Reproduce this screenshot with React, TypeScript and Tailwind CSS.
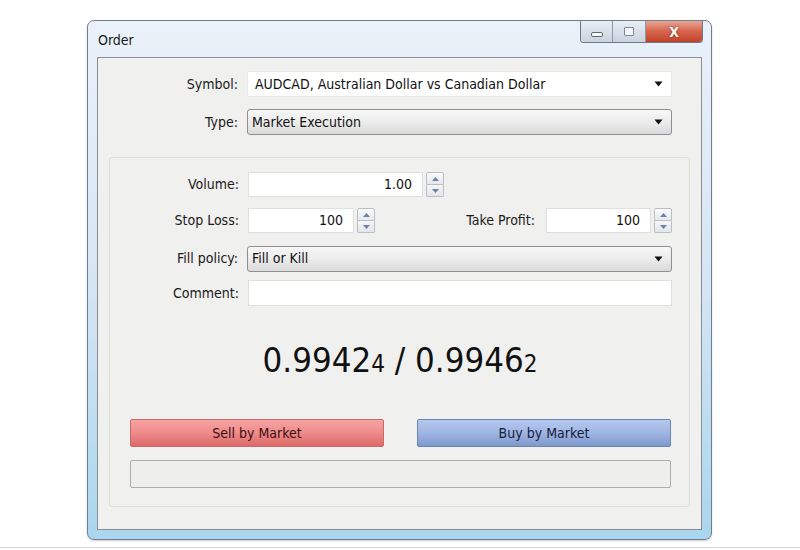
import React from "react";

const font = { fontFamily: '"DejaVu Sans Condensed", "DejaVu Sans", sans-serif' };

function Arrow() {
  return (
    <svg width="9" height="6" viewBox="0 0 9 6" className="shrink-0">
      <path d="M0.5 0.5 L8.5 0.5 L4.5 5.5 Z" fill="#111" />
    </svg>
  );
}

function Spinner() {
  return (
    <div className="flex flex-col w-[18px] h-[25px] ml-[3px]">
      <div className="flex-1 flex items-center justify-center border border-[#b9bec6] rounded-t-[2px] bg-gradient-to-b from-[#fbfbfb] to-[#e6e8ec]">
        <svg width="7" height="4" viewBox="0 0 7 4"><path d="M0 4 L3.5 0 L7 4 Z" fill="#6d82ab" /></svg>
      </div>
      <div className="flex-1 flex items-center justify-center border border-t-0 border-[#b9bec6] rounded-b-[2px] bg-gradient-to-b from-[#f6f6f7] to-[#e3e5ea]">
        <svg width="7" height="4" viewBox="0 0 7 4"><path d="M0 0 L3.5 4 L7 0 Z" fill="#6d82ab" /></svg>
      </div>
    </div>
  );
}

function Label({ children, w }: { children: React.ReactNode; w: string }) {
  return <div className={`${w} shrink-0 text-right pr-[9px] text-[14px] text-[#1a1a1a] whitespace-nowrap`}>{children}</div>;
}

function NumInput({ value, w }: { value: string; w: string }) {
  return (
    <div className={`${w} h-[25px] bg-white border border-[#dedfe0] flex items-center justify-end pr-[10px] text-[14px] text-[#111]`}>
      {value}
    </div>
  );
}

function GraySelect({ text }: { text: string }) {
  return (
    <div className="flex-1 h-[26px] rounded-[3px] border border-[#8d8f93] bg-gradient-to-b from-[#f7f7f7] via-[#ececec] to-[#dadada] flex items-center justify-between pl-[4px] pr-[8px] text-[14px] text-[#111]">
      <span>{text}</span>
      <Arrow />
    </div>
  );
}

export default function App() {
  return (
    <div className="w-[800px] h-[550px] bg-white overflow-hidden" style={font}>
      <div className="h-[548px] border-b border-[#d4d4d4] pt-[20px]">
        <div className="ml-[87px] w-[625px] h-[520px] rounded-[7px] border border-[#6f7f90] bg-gradient-to-b from-[#eaf1f9] via-[#d6e5f4] to-[#a9d6ee] flex flex-col px-[9px] pb-[9px] shadow-[0_1px_2px_rgba(0,0,0,0.2)]">
          {/* title bar */}
          <div className="h-[36px] shrink-0 flex items-start justify-between">
            <div className="pt-[9px] pl-[1px] text-[14px] text-[#1a1a1a]">Order</div>
            <div className="flex h-[22px] mr-[-1px] rounded-b-[4px] overflow-hidden border border-t-0 border-[#6a7888]">
              <div className="w-[32px] flex items-center justify-center bg-gradient-to-b from-[#e9eef4] to-[#c9d3de] border-r border-[#8e9aa7]">
                <div className="w-[12px] h-[5px] border border-[#5a6878] rounded-[2px] bg-white mt-[6px]" />
              </div>
              <div className="w-[33px] flex items-center justify-center bg-gradient-to-b from-[#e9eef4] to-[#c9d3de] border-r border-[#8e9aa7]">
                <div className="w-[10px] h-[9px] border border-[#7e8a98] rounded-[1px] bg-[#f3f5f8]" />
              </div>
              <div className="w-[56px] flex items-center justify-center bg-gradient-to-b from-[#e8a595] via-[#d5634d] to-[#c24128]">
                <span className="text-white font-bold text-[14px] leading-none" style={{ textShadow: "0 0 2px #7a1a0a" }}>X</span>
              </div>
            </div>
          </div>
          {/* client */}
          <div className="flex-1 border border-[#8a8d91] bg-[#f0f0ee] flex flex-col pt-[13px]">
            <div className="flex items-center h-[26px] pr-[29px]">
              <Label w="w-[149px]">Symbol:</Label>
              <div className="flex-1 h-[26px] bg-white border border-[#e9e9e9] flex items-center justify-between pl-[7px] pr-[8px] text-[14px] text-[#111]">
                <span>AUDCAD, Australian Dollar vs Canadian Dollar</span>
                <Arrow />
              </div>
            </div>
            <div className="flex items-center h-[26px] mt-[12px] pr-[29px]">
              <Label w="w-[149px]">Type:</Label>
              <GraySelect text="Market Execution" />
            </div>
            {/* group */}
            <div className="mx-[11px] mt-[22px] mb-[22px] flex-1 border border-[#dcdddd] rounded-[3px] flex flex-col pt-[14px]">
              <div className="flex items-center h-[25px]">
                <Label w="w-[138px]">Volume:</Label>
                <NumInput value="1.00" w="w-[175px]" />
                <Spinner />
              </div>
              <div className="flex items-center h-[25px] mt-[11px]">
                <Label w="w-[138px]">Stop Loss:</Label>
                <NumInput value="100" w="w-[106px]" />
                <Spinner />
                <div className="w-[171px] shrink-0 text-right pr-[11px] text-[14px] text-[#1a1a1a] whitespace-nowrap">Take Profit:</div>
                <NumInput value="100" w="w-[105px]" />
                <Spinner />
              </div>
              <div className="flex items-center h-[27px] mt-[12px] pr-[17px]">
                <Label w="w-[137px]">Fill policy:</Label>
                <GraySelect text="Fill or Kill" />
              </div>
              <div className="flex items-center h-[26px] mt-[8px] pr-[17px]">
                <Label w="w-[138px]">Comment:</Label>
                <div className="flex-1 h-[26px] bg-white border border-[#dedfe0]" />
              </div>
              <div className="flex justify-center items-baseline mt-[37px] h-[40px] text-[#111] leading-none pl-[1px]">
                <span className="text-[34.5px]">0.9942</span>
                <span className="text-[24px]">4</span>
                <span className="text-[34.5px]">&nbsp;/ 0.9946</span>
                <span className="text-[24px]">2</span>
              </div>
              <div className="flex mt-[36px] px-[20px] gap-[33px] pr-[18px]">
                <div className="flex-1 h-[28px] rounded-[2px] border border-[#c86a6a] bg-gradient-to-b from-[#f7a3a3] via-[#ef8a8a] to-[#dc6a6a] flex items-center justify-center text-[14px] text-[#3a1010]">
                  Sell by Market
                </div>
                <div className="flex-1 h-[28px] rounded-[2px] border border-[#6c84b4] bg-gradient-to-b from-[#b4c8ef] via-[#9fb5e2] to-[#7f98cc] flex items-center justify-center text-[14px] text-[#14203a]">
                  Buy by Market
                </div>
              </div>
              <div className="mt-[13px] mx-[20px] mr-[18px] h-[28px] border border-[#adadad] rounded-[2px] bg-[#eeeeec]" />
            </div>
          </div>
        </div>
      </div>
    </div>
  );
}
